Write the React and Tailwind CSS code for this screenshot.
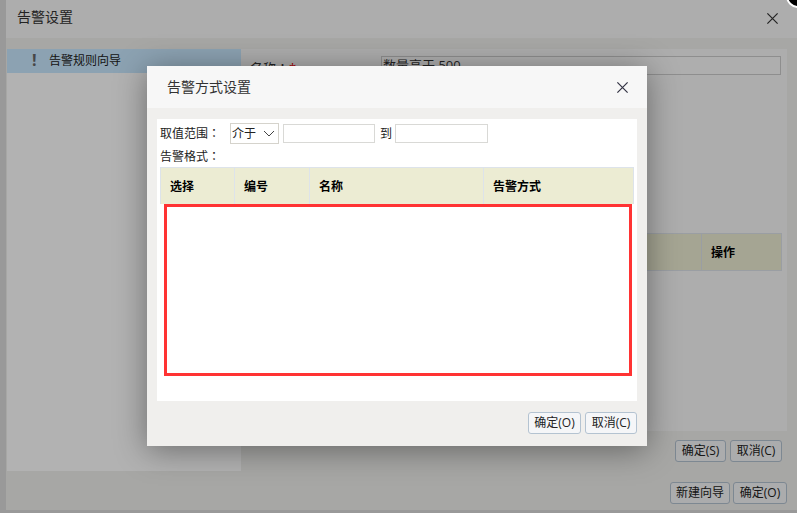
import React from "react";

const Btn = ({ children, className = "" }) => (
  <button className={`h-[22px] rounded-[3px] border border-[#b4c3d1] bg-[#f5f6f8] text-[12px] leading-[20px] text-[#222] text-center ${className}`}>
    {children}
  </button>
);

const X = ({ size = 14, color = "#333" }) => (
  <svg width={size} height={size} viewBox="0 0 14 14" fill="none" stroke={color} strokeWidth="1.3">
    <path d="M1.5 1.5 L12.5 12.5 M12.5 1.5 L1.5 12.5" />
  </svg>
);

const Colon = () => (
  <span className="font-['Noto_Sans_CJK_TC']">：</span>
);

const Th = ({ children, className = "" }) => (
  <div className={`flex items-center pl-[9px] pt-[1px] text-[12px] font-bold text-black bg-[#ececd3] border-l border-[#dde3ea] ${className}`}>
    {children}
  </div>
);

export default function App() {
  return (
    <div className="relative w-[797px] h-[513px] overflow-hidden bg-[#dcdcdc] pl-[6px] pb-[3px] text-[12px]" style={{ fontFamily: '"Open Sans","Noto Sans CJK SC","Noto Sans",sans-serif' }}>
      {/* underlying dialog */}
      <div className="flex flex-col w-full h-full bg-[#f0efed]">
        <div className="flex items-center justify-between h-[38px] bg-[#f8f8f8] pl-[11px] pr-[18px] text-[14px] text-[#333]">
          <span className="-mt-[5px]">告警设置</span>
          <span className="-mt-[1px]"><X size={13} /></span>
        </div>
        <div className="flex mt-[11px] pl-px pr-[10px]">
          <div className="w-[234px] h-[422px] bg-white">
            <div className="flex items-center h-[24px] bg-[#c9e8ff] pl-[25px] text-[#222]">
              <span className="w-[17px] text-[16px] font-bold text-[#666] leading-none mb-[3px]">!</span>
              <span>告警规则向导</span>
            </div>
          </div>
          <div className="flex-1 h-[382px] bg-[#f8f8f8] relative">
            <div className="flex items-start h-[29px] pt-[7px] pl-[9px] pr-[6px] text-[13px]">
              <span className="w-[131px] pt-[2px] leading-[19px] text-[#333]">名称<Colon /><span className="text-[#e00]">*</span></span>
              <div className="flex-1 h-[19px] border border-[#ccc] bg-[#fafafa] pl-[1px] leading-[17px] text-[#333]">数量高于 500</div>
            </div>
            <div className="flex justify-end mt-[155px] mr-[5px] h-[38px] bg-[#ececd3] border border-[#dde3ea]">
              <div className="flex items-center w-[80px] pt-[1px] border-l border-[#dde3ea] pl-[9px] text-[12px] font-bold text-black">操作</div>
            </div>
          </div>
        </div>
        <div className="flex justify-end gap-[4px] pr-[15px] -mt-[31px] ml-[600px]">
          <Btn className="w-[51px]">确定(S)</Btn>
          <Btn className="w-[52px]">取消(C)</Btn>
        </div>
        <div className="flex justify-end gap-[3px] pr-[10px] mt-[20px]">
          <Btn className="w-[60px]">新建向导</Btn>
          <Btn className="w-[54px]">确定(O)</Btn>
        </div>
      </div>

      {/* dim overlay */}
      <div className="absolute inset-0 bg-black/30" />

      {/* corner close */}
      <div className="absolute -top-[16px] -right-[13px] w-[24px] h-[24px] rounded-full bg-black border-2 border-white" />

      {/* modal */}
      <div className="absolute left-[147px] top-[66px] w-[500px] h-[380px] flex flex-col bg-[#f0efed] shadow-[0_4px_30px_rgba(0,0,0,0.4)]">
        <div className="flex items-center justify-between h-[42px] bg-[#f7f7f7] pl-[20px] pr-[18px] text-[14px] text-[#333]">
          <span className="-mt-[2px]">告警方式设置</span>
          <X size={13} color="#334" />
        </div>
        <div className="mx-[10px] mt-[11px] h-[282px] bg-white px-[3px] pt-[4px]">
          <div className="flex items-center h-[21px] text-[#222]">
            <span className="w-[70px]">取值范围<Colon /></span>
            <div className="flex items-center justify-between w-[49px] h-[21px] border border-[#d5d3cc] pl-[1px] pr-[3px]">
              <span>介于</span>
              <svg width="12" height="7" viewBox="0 0 12 7" fill="none" stroke="#444" strokeWidth="1"><path d="M1 1 L6 6 L11 1" /></svg>
            </div>
            <div className="ml-[4px] w-[92px] h-[19px] border border-[#d9d9d6]" />
            <span className="ml-[5px] w-[15px]">到</span>
            <div className="w-[93px] h-[19px] border border-[#d9d9d6]" />
          </div>
          <div className="h-[20px] leading-[24px] text-[#222]">告警格式<Colon /></div>
          <div className="relative mt-[3px] w-[474px]">
            <div className="flex h-[37px] border-t border-r border-[#dde3ea]">
              <Th className="w-[74px]">选择</Th>
              <Th className="w-[75px]">编号</Th>
              <Th className="w-[174px]">名称</Th>
              <Th className="flex-1">告警方式</Th>
            </div>
            <div className="ml-[4px] w-[468px] h-[172px] border-[3px] border-[#f33] bg-white" />
          </div>
        </div>
        <div className="flex justify-end gap-[4px] pr-[10px] pt-[11px]">
          <Btn className="w-[53px]">确定(O)</Btn>
          <Btn className="w-[52px]">取消(C)</Btn>
        </div>
      </div>
    </div>
  );
}
